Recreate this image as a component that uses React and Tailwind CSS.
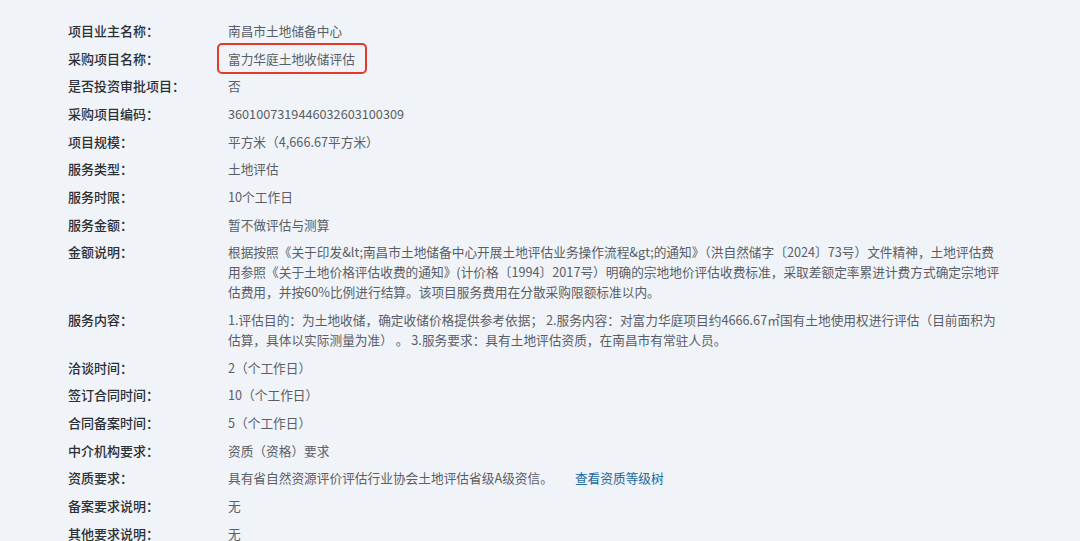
import React from 'react';

const rows = [
    { label: '项目业主名称：', value: '南昌市土地储备中心' },
    { label: '采购项目名称：', value: '富力华庭土地收储评估', boxed: true },
    { label: '是否投资审批项目：', value: '否' },
    { label: '采购项目编码：', value: '3601007319446032603100309' },
    { label: '项目规模：', value: '平方米（4,666.67平方米）' },
    { label: '服务类型：', value: '土地评估' },
    { label: '服务时限：', value: '10个工作日' },
    { label: '服务金额：', value: '暂不做评估与测算' },
    {
        label: '金额说明：',
        lines: [
            '根据按照《关于印发&lt;南昌市土地储备中心开展土地评估业务操作流程&gt;的通知》（洪自然储字〔2024〕73号）文件精神，土地评估费',
            '用参照《关于土地价格评估收费的通知》(计价格〔1994〕2017号）明确的宗地地价评估收费标准，采取差额定率累进计费方式确定宗地评',
            '估费用，并按60%比例进行结算。该项目服务费用在分散采购限额标准以内。',
        ],
    },
    {
        label: '服务内容：',
        lines: [
            '1.评估目的：为土地收储，确定收储价格提供参考依据； 2.服务内容：对富力华庭项目约4666.67㎡国有土地使用权进行评估（目前面积为',
            '估算，具体以实际测量为准） 。 3.服务要求：具有土地评估资质，在南昌市有常驻人员。',
        ],
    },
    { label: '洽谈时间：', value: '2（个工作日）' },
    { label: '签订合同时间：', value: '10（个工作日）' },
    { label: '合同备案时间：', value: '5（个工作日）' },
    { label: '中介机构要求：', value: '资质（资格）要求' },
    { label: '资质要求：', value: '具有省自然资源评价评估行业协会土地评估省级A级资信。', link: '查看资质等级树' },
    { label: '备案要求说明：', value: '无' },
    { label: '其他要求说明：', value: '无' },
];

const Row = ({ row }) => (
    <div className="flex py-[3.85px] leading-[20px]">
        <div className="w-[160px] shrink-0 text-[13px] font-medium text-[#2b2f36]">{row.label}</div>
        <div className="text-[12.7px] text-[#5a5e66]">
            {row.lines ? (
                row.lines.map((l, i) => (
                    <div key={i} className="whitespace-pre">{l}</div>
                ))
            ) : (
                <span className="relative whitespace-nowrap">
                    {row.value}
                    {row.boxed && (
                        <span className="absolute -left-[11px] -right-[12px] -top-[6px] -bottom-[6px] rounded-[5px] border-2 border-[#e2392b]" />
                    )}
                    {row.link && <span className="ml-[22px] text-[#22689f]">{row.link}</span>}
                </span>
            )}
        </div>
    </div>
);

const App = () => {
    return (
        <div
            className="h-[541px] w-[1080px] overflow-hidden bg-[#f0f3f8] pl-[68px] pt-[17px]"
            style={{ fontFamily: '"Noto Sans CJK SC", "Noto Sans", sans-serif' }}
        >
            {rows.map((r, i) => (
                <Row key={i} row={r} />
            ))}
        </div>
    );
};

export default App;
